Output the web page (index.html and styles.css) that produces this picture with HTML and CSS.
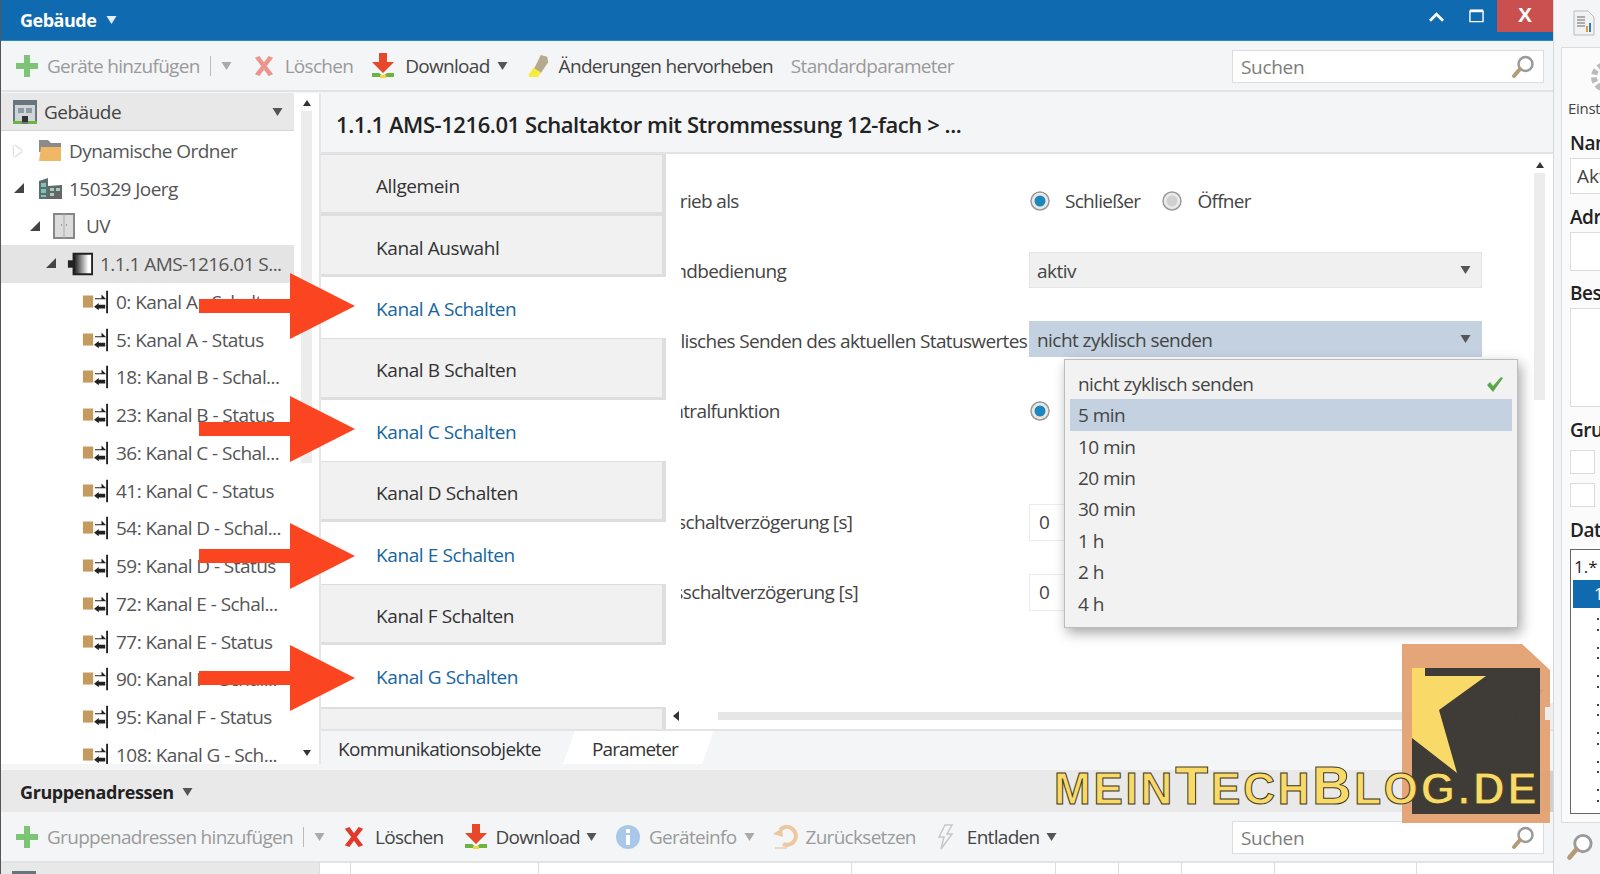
FILE: index.html
```html
<!DOCTYPE html>
<html lang="de">
<head>
<meta charset="utf-8">
<title>Gebäude</title>
<link rel="stylesheet" href="styles.css">
</head>
<body>
<svg class="defs" width="0" height="0" aria-hidden="true">
  <defs>
    <symbol id="i-plus" viewBox="0 0 24 24"><path d="M9 1h6v8h8v6h-8v8H9v-8H1V9h8z" fill="#7cc576"/></symbol>
    <symbol id="i-x" viewBox="0 0 24 24"><path d="M2 3l5-2 5 7 5-7 5 2-7 9 7 9-5 2-5-7-5 7-5-2 7-9z" fill="#e23a2a"/></symbol>
    <symbol id="i-dl" viewBox="0 0 26 28"><path d="M9 1h8v9h7L13 21 2 10h7z" fill="#e8482a"/><path d="M2 21h7l4 3 4-3h7v4H2z" fill="#6cb33f"/><path d="M10 23h6v3h-6z" fill="#f2d840"/></symbol>
    <symbol id="i-mark" viewBox="0 0 24 26"><path d="M14 1l7 2 1 6-8 12-8-4z" fill="#b5aa8e"/><path d="M6 15l8 5-3 5H1v-3z" fill="#f6ec3f"/></symbol>
    <symbol id="i-glass" viewBox="0 0 24 24"><circle cx="14.500" cy="9" r="7" fill="#fff" stroke="#9a9a9a" stroke-width="2.500"/><path d="M9 14l-6 7" stroke="#b39a78" stroke-width="4" stroke-linecap="round"/></symbol>
    <symbol id="i-caret" viewBox="0 0 10 8"><path d="M0 0h10L5 8z" fill="currentColor"/></symbol>
    <symbol id="i-item" viewBox="0 0 28 26"><path d="M1 6h11v13H1z" fill="#c49a5e"/><path d="M14 9h7V5l5 5-5 0h-7z" fill="#222"/><path d="M25 16h-7v-2l-5 4 5 4v-2h7z" fill="#222"/><path d="M26 1h2v24h-2z" fill="#222"/></symbol>
    <symbol id="i-building" viewBox="0 0 26 26"><path d="M1 1h24v24H1z" fill="#68757b"/><path d="M3 6h20v17H3z" fill="#cfd5d9"/><path d="M6 9h6v5H6zM14 9h6v5h-6z" fill="#8d9ca3"/><path d="M10 17h6v6h-6z" fill="#333"/><path d="M1 22h9v3H1zM16 22h9v3h-9z" fill="#6cb33f"/></symbol>
    <symbol id="i-folder" viewBox="0 0 26 26"><path d="M2 2h9l3 3h10v9H2z" fill="#8a8a8a"/><path d="M2 23l2-14h20v14z" fill="#f0b864"/></symbol>
    <symbol id="i-project" viewBox="0 0 26 24"><path d="M2 4l9-3v21H2z" fill="#5f6d70"/><path d="M4 6h5v4H4zM4 12h5v4H4zM4 18h5v2H4z" fill="#7ec3b5"/><path d="M11 9l14-1v14H11z" fill="#666"/><path d="M13 11h4v3h-4zM19 11h4v3h-4zM13 16h4v3h-4z" fill="#9fd0c4"/></symbol>
    <symbol id="i-cab" viewBox="0 0 22 26"><path d="M1 1h20v24H1z" fill="#dcdcdc" stroke="#888" stroke-width="2"/><path d="M11 1v24" stroke="#aaa"/><path d="M8 12h1M13 12h1" stroke="#555"/></symbol>
    <symbol id="i-dev" viewBox="0 0 28 26"><defs><linearGradient id="g-dev" x1="0" x2="1"><stop offset="0" stop-color="#111"/><stop offset=".8" stop-color="#fff"/></linearGradient></defs><path d="M7 2h20v22H7z" fill="url(#g-dev)" stroke="#222" stroke-width="2"/><path d="M1 9h6v8H1z" fill="#222"/></symbol>
    <symbol id="i-radio" viewBox="0 0 20 20"><circle cx="10" cy="10" r="9" fill="#e9e9e9" stroke="#9a9a9a" stroke-width="1.500"/><circle cx="10" cy="10" r="5.500" fill="#1c86bd"/></symbol>
    <symbol id="i-radio-off" viewBox="0 0 20 20"><circle cx="10" cy="10" r="9" fill="#e9e9e9" stroke="#9a9a9a" stroke-width="1.500"/><circle cx="10" cy="10" r="5.500" fill="#d0d0d0"/></symbol>
    <symbol id="i-arrow" viewBox="0 0 156 66"><path d="M0 26h91V0l65 33-65 33V40H0z" fill="#fb4521"/></symbol>
  </defs>
</svg>

<div class="app">
  <main class="win">
    <header class="titlebar">
      <div class="title">Gebäude <svg class="caret caret-w"><use href="#i-caret"/></svg></div>
      <div class="winbtns">
        <svg class="wb wb-up" viewBox="0 0 16 12"><path d="M1 10l7-7 7 7" fill="none" stroke="#fff" stroke-width="3"/></svg>
        <svg class="wb wb-max" viewBox="0 0 16 14"><path d="M1 2h14v11H1z" fill="none" stroke="#fff" stroke-width="1.500"/><path d="M1 1.500h14" stroke="#fff" stroke-width="3"/></svg>
        <div class="wb-close">X</div>
      </div>
    </header>

    <div class="toolbar">
      <span class="tb dis"><svg class="ic ic-plus"><use href="#i-plus"/></svg>Geräte hinzufügen</span>
      <span class="sep"></span><svg class="caret caret-dis"><use href="#i-caret"/></svg>
      <span class="tb dis tb-a"><svg class="ic ic-x ic-x1 faded"><use href="#i-x"/></svg>Löschen</span>
      <span class="tb tb-b"><svg class="ic ic-dl"><use href="#i-dl"/></svg>Download</span><svg class="caret caret-n"><use href="#i-caret"/></svg>
      <span class="tb tb-c"><svg class="ic ic-mark"><use href="#i-mark"/></svg>Änderungen hervorheben</span>
      <span class="tb dis tb-d">Standardparameter</span>
      <div class="search"><span>Suchen</span><svg class="glass"><use href="#i-glass"/></svg></div>
    </div>

    <div class="middle">
      <aside class="side">
        <div class="treehead"><svg class="ic-head"><use href="#i-building"/></svg><span class="treehead-t">Gebäude</span><svg class="caret caret-on"><use href="#i-caret"/></svg></div>
        <ul class="tree">
          <li class="row l0"><i class="tw tw-open"></i><svg class="ti"><use href="#i-folder"/></svg>Dynamische Ordner</li>
          <li class="row l0"><i class="tw tw-down"></i><svg class="ti"><use href="#i-project"/></svg>150329 Joerg</li>
          <li class="row l1"><i class="tw tw-down"></i><svg class="ti ti-cab"><use href="#i-cab"/></svg>UV</li>
          <li class="row l2 sel"><i class="tw tw-down"></i><svg class="ti"><use href="#i-dev"/></svg>1.1.1 AMS-1216.01 S...</li>
          <li class="row l3"><svg class="ti"><use href="#i-item"/></svg>0: Kanal A - Schalt...</li>
          <li class="row l3"><svg class="ti"><use href="#i-item"/></svg>5: Kanal A - Status</li>
          <li class="row l3"><svg class="ti"><use href="#i-item"/></svg>18: Kanal B - Schal...</li>
          <li class="row l3"><svg class="ti"><use href="#i-item"/></svg>23: Kanal B - Status</li>
          <li class="row l3"><svg class="ti"><use href="#i-item"/></svg>36: Kanal C - Schal...</li>
          <li class="row l3"><svg class="ti"><use href="#i-item"/></svg>41: Kanal C - Status</li>
          <li class="row l3"><svg class="ti"><use href="#i-item"/></svg>54: Kanal D - Schal...</li>
          <li class="row l3"><svg class="ti"><use href="#i-item"/></svg>59: Kanal D - Status</li>
          <li class="row l3"><svg class="ti"><use href="#i-item"/></svg>72: Kanal E - Schal...</li>
          <li class="row l3"><svg class="ti"><use href="#i-item"/></svg>77: Kanal E - Status</li>
          <li class="row l3"><svg class="ti"><use href="#i-item"/></svg>90: Kanal F - Schal...</li>
          <li class="row l3"><svg class="ti"><use href="#i-item"/></svg>95: Kanal F - Status</li>
          <li class="row l3"><svg class="ti"><use href="#i-item"/></svg>108: Kanal G - Sch...</li>
        </ul>
      </aside>
      <div class="vscroll">
        <i class="tri tri-up"></i><div class="vthumb"></div><i class="tri tri-down"></i>
      </div>

      <section class="detail">
        <h1 class="dtitle">1.1.1 AMS-1216.01 Schaltaktor mit Strommessung 12-fach &gt; ...</h1>
        <div class="dbody">
          <nav class="tabs">
            <div class="tab off">Allgemein</div>
            <div class="tab off">Kanal Auswahl</div>
            <div class="tab on">Kanal A Schalten</div>
            <div class="tab off">Kanal B Schalten</div>
            <div class="tab on">Kanal C Schalten</div>
            <div class="tab off">Kanal D Schalten</div>
            <div class="tab on">Kanal E Schalten</div>
            <div class="tab off">Kanal F Schalten</div>
            <div class="tab on">Kanal G Schalten</div>
            <div class="tab-stub"></div>
          </nav>
          <div class="pane">
            <div class="form">
              <div class="frow"><label class="lb"><span>Betrieb als</span></label>
                <div class="radios"><svg class="rd"><use href="#i-radio"/></svg><span>Schließer</span><svg class="rd rd-2"><use href="#i-radio-off"/></svg><span>Öffner</span></div></div>
              <div class="frow"><label class="lb"><span>Handbedienung</span></label>
                <div class="sel-box">aktiv<svg class="caret caret-on"><use href="#i-caret"/></svg></div></div>
              <div class="frow"><label class="lb"><span>Zyklisches Senden des aktuellen Statuswertes</span></label>
                <div class="sel-box sel-open">nicht zyklisch senden<svg class="caret caret-on"><use href="#i-caret"/></svg></div></div>
              <div class="frow"><label class="lb"><span>Zentralfunktion</span></label>
                <div class="radios"><svg class="rd"><use href="#i-radio"/></svg></div></div>
              <div class="fgap"></div>
              <div class="frow"><label class="lb"><span>Einschaltverzögerung [s]</span></label><div class="num">0</div></div>
              <div class="frow"><label class="lb"><span>Ausschaltverzögerung [s]</span></label><div class="num">0</div></div>
            </div>
            <div class="pv"><i class="tri tri-up"></i><div class="pv-thumb"></div><i class="tri tri-down"></i></div>
            <div class="ph-corner"></div>
            <div class="ph"><i class="tri tri-left"></i><div class="ph-thumb"></div><i class="tri tri-right"></i></div>
          </div>
        </div>
        <div class="dtabs">
          <span class="dtab">Kommunikationsobjekte</span>
          <span class="dtab dtab-on">Parameter</span>
        </div>
      </section>
    </div>

    <div class="gap-strip"></div>
    <div class="groupbar">Gruppenadressen <svg class="caret caret-on"><use href="#i-caret"/></svg>
      <div class="gb-btns">
        <svg class="wb gb-up" viewBox="0 0 16 12"><path d="M1 10l7-7 7 7" fill="none" stroke="#111" stroke-width="3"/></svg>
        <svg class="wb gb-max" viewBox="0 0 16 14"><path d="M1 2h14v11H1z" fill="none" stroke="#111" stroke-width="2"/></svg>
        <div class="gb-close">×</div>
      </div>
    </div>

    <div class="toolbar toolbar-2">
      <span class="tb dis"><svg class="ic ic-plus"><use href="#i-plus"/></svg>Gruppenadressen hinzufügen</span>
      <span class="sep"></span><svg class="caret caret-dis"><use href="#i-caret"/></svg>
      <span class="tb t2-a"><svg class="ic ic-x ic-x2"><use href="#i-x"/></svg>Löschen</span>
      <span class="tb t2-b"><svg class="ic ic-dl ic-dl2"><use href="#i-dl"/></svg>Download</span><svg class="caret caret-m"><use href="#i-caret"/></svg>
      <span class="tb dis t2-c"><svg class="ic ic-info" viewBox="0 0 24 24"><circle cx="12" cy="12" r="12" fill="#a9c8e8"/><path d="M10 10h4v10h-4zM10 4h4v4h-4z" fill="#fff"/></svg>Geräteinfo</span><svg class="caret caret-dis caret-i"><use href="#i-caret"/></svg>
      <span class="tb dis t2-d"><svg class="ic ic-undo" viewBox="0 0 26 24"><path d="M8 5a9 9 0 1 1 3 14" fill="none" stroke="#edc79f" stroke-width="4"/><path d="M1 9l9-6 1 9z" fill="#edc79f"/><path d="M3 22h12v2H3z" fill="#f0d8bf"/></svg>Zurücksetzen</span>
      <span class="tb t2-e"><svg class="ic ic-bolt" viewBox="0 0 18 26"><path d="M9 1h7l-5 9h5L5 25l3-12H3z" fill="#f6f6f6" stroke="#c8c8c8" stroke-width="1.500"/></svg>Entladen</span><svg class="caret caret-m"><use href="#i-caret"/></svg>
      <div class="search"><span>Suchen</span><svg class="glass"><use href="#i-glass"/></svg></div>
    </div>

    <div class="tablehead">
      <div class="th-left"><svg class="th-ic"><use href="#i-building"/></svg></div>
      <div class="th th-1"></div><div class="th th-2"></div><div class="th th-3"></div><div class="th th-4"></div><div class="th th-5"></div><div class="th th-6"></div><div class="th th-7"></div><div class="th th-8"></div><div class="th"></div>
    </div>

    <ul class="menu">
      <li class="mi">nicht zyklisch senden<svg class="check" viewBox="0 0 18 16"><path d="M1 9l3-3 3 4 8-9 2 1-10 14z" fill="#5aa64a"/></svg></li>
      <li class="mi mi-hover">5 min</li>
      <li class="mi">10 min</li>
      <li class="mi">20 min</li>
      <li class="mi">30 min</li>
      <li class="mi">1 h</li>
      <li class="mi">2 h</li>
      <li class="mi">4 h</li>
    </ul>
  </main>

  <aside class="rail">
    <svg class="rail-doc" viewBox="0 0 22 26"><path d="M1 1h14l6 6v18H1z" fill="#f2f2f2" stroke="#bbb"/><path d="M4 7h8M4 10h8M4 13h8M4 16h8" stroke="#666"/><path d="M14 22v-6" stroke="#e09a3c" stroke-width="2"/><path d="M17 22v-9" stroke="#2f7fc1" stroke-width="2"/></svg>
    <div class="rail-panel">
      <svg class="rail-gear" viewBox="0 0 26 30"><circle cx="20" cy="15" r="12" fill="none" stroke="#bbb" stroke-width="6" stroke-dasharray="5 3"/></svg>
      <div class="rail-cap">Einstellungen</div>
      <div class="rail-h">Name</div>
      <div class="rail-in rail-in-1">Aktor</div>
      <div class="rail-h">Adresse</div>
      <div class="rail-in rail-in-2"></div>
      <div class="rail-h">Beschreibung</div>
      <div class="rail-in rail-in-3"></div>
      <div class="rail-h">Gruppen</div>
      <div class="rail-chk rail-chk-1"></div>
      <div class="rail-chk"></div>
      <div class="rail-h rail-h-dat">Datenpunkt</div>
      <div class="rail-list">
        <div class="rail-li">1.*</div>
        <div class="rail-li rail-li-sel">1</div>
        <div class="rail-dots"><i></i><i></i><i></i><i></i><i></i><i></i><i></i></div>
      </div>
    </div>
    <svg class="rail-glass"><use href="#i-glass"/></svg>
  </aside>

  <svg class="arrow arrow-1"><use href="#i-arrow"/></svg>
  <svg class="arrow arrow-2"><use href="#i-arrow"/></svg>
  <svg class="arrow arrow-3"><use href="#i-arrow"/></svg>
  <svg class="arrow arrow-4"><use href="#i-arrow"/></svg>

  <div class="logo">
    <svg class="logo-card" viewBox="0 0 148 179"><path d="M0 0h120l28 26v37h-5v13h5v103H0z" fill="#e3a272" fill-opacity=".96"/><path d="M10 24h128v146H10z" fill="#333" fill-opacity=".93"/><path d="M10 24h13v8h61L37 66l18 63-45-35z" fill="#f9d967"/></svg>
    <div class="logo-text"><span class="sm">MEIN</span><span class="lg">T</span><span class="sm">ECH</span><span class="lg">B</span><span class="sm">LOG.DE</span></div>
  </div>
</div>
</body>
</html>
```

FILE: styles.css
```css
* { box-sizing: border-box; }
html, body { margin: 0; height: 100%; overflow: hidden; }
body { font-family: "Open Sans", "Noto Sans", "Liberation Sans", sans-serif; font-size: 19px; color: #444; background: #f4f5f7; }
ul { list-style: none; margin: 0; padding: 0; }
.defs { position: absolute; }

.app { width: 1600px; height: 874px; display: flex; position: relative; overflow: hidden; }
.win { width: 1553px; height: 874px; flex: none; position: relative; display: flex; flex-direction: column; border-left: 1px solid #555; }

.titlebar { height: 41px; flex: none; background: #106ab0; color: #fff; display: flex; justify-content: space-between; border-bottom: 1px solid #2f86c4; }
.title { padding: 8px 0 0 19px; font-weight: 700; font-size: 18px; letter-spacing: -.5px; }
.caret { width: 11px; height: 8px; color: #555; flex: none; }
.caret-w { color: #e4eef7; margin: 0 0 3px 6px; }
.caret-dis { color: #aaa; margin-left: 10px; }
.caret-on { margin-left: 10px; }
.caret-n { margin-left: 7px; }
.caret-m { margin-left: 6px; }
.caret-i { margin-left: 8px; }
.winbtns { display: flex; align-items: flex-start; }
.wb { width: 15px; flex: none; }
.wb-up { height: 12px; margin: 11px 25px 0 0; }
.wb-max { height: 14px; margin: 9px 13px 0 0; }
.wb-close { width: 56px; height: 32px; background: #c9504f; color: #fff; font-size: 21px; font-weight: 700; text-align: center; line-height: 30px; font-family: "Liberation Sans", sans-serif; }

.toolbar { height: 51px; flex: none; display: flex; align-items: center; padding: 1px 0 0 14px; background: #f4f5f7; border-bottom: 2px solid #e2e3e5; position: relative; font-size: 19px; letter-spacing: -.7px; }
.tb { display: inline-flex; align-items: center; color: #444; white-space: nowrap; }
.dis { color: #9a9a9a; }
.ic { flex: none; margin-right: 9px; }
.ic-plus { width: 24px; height: 24px; margin-right: 8px; }
.ic-x { width: 22px; height: 24px; }
.ic-x1 { margin-right: 10px; }
.ic-x2 { margin-right: 10px; }
.ic-dl { width: 26px; height: 28px; }
.ic-dl2 { margin-right: 7px; }
.ic-mark { width: 22px; height: 26px; }
.ic-info { width: 24px; height: 24px; }
.ic-undo { width: 26px; height: 24px; margin-right: 7px; }
.ic-bolt { width: 18px; height: 26px; margin-right: 13px; }
.faded { opacity: .5; }
.sep { width: 1px; height: 20px; background: #bbb; margin-left: 10px; }
.tb-a { margin-left: 21px; }
.tb-b { margin-left: 17px; }
.tb-c { margin-left: 20px; }
.tb-d { margin-left: 18px; }
.t2-a { margin-left: 18px; }
.t2-b { margin-left: 19px; }
.t2-c { margin-left: 19px; }
.t2-d { margin-left: 17px; }
.t2-e { margin-left: 20px; }

.search { position: absolute; left: 1231px; top: 9px; width: 312px; height: 33px; background: #fff; border: 1px solid #dcdcdc; padding-left: 8px; display: flex; align-items: center; justify-content: space-between; color: #7c7c7c; letter-spacing: -.3px; }
.glass { width: 24px; height: 24px; margin-right: 8px; }

.middle { height: 672px; flex: none; display: flex; padding-top: 1px; }
.side { width: 293px; flex: none; overflow: hidden; background: #fff; }
.treehead { height: 38px; background: #e8e8e8; border-bottom: 1px solid #d4d4d4; display: flex; align-items: center; padding: 0 11px 0 10px; font-weight: 500; letter-spacing: -.5px; }
.treehead-t { flex: 1; margin-left: 4px; color: #444; }
.ic-head { width: 26px; height: 26px; margin-left: 1px; margin-right: 2px; }
.tree { padding-top: 1px; height: 633px; overflow: hidden; }
.row { height: 37.75px; display: flex; align-items: center; white-space: nowrap; color: #555; position: relative; font-size: 19px; letter-spacing: -.55px; }
.ti { width: 26px; height: 26px; flex: none; margin-right: 6px; }
.ti-cab { width: 22px; margin-right: 11px; }
.l0 { padding-left: 36px; }
.l1 { padding-left: 52px; }
.l2 { padding-left: 66px; }
.l2 .ti { margin-right: 7px; }
.l3 { padding-left: 81px; }
.l3 .ti { margin-right: 8px; }
.sel { background: #e4e4e4; }
.tw { position: absolute; top: 13px; width: 0; height: 0; }
.l0 .tw { left: 13px; }
.l1 .tw { left: 29px; }
.l2 .tw { left: 45px; }
.tw-open { border-left: 8px solid #fff; border-top: 6px solid transparent; border-bottom: 6px solid transparent; filter: drop-shadow(0 0 1px #999); }
.tw-down { border-bottom: 10px solid #444; border-left: 10px solid transparent; }

.vscroll { width: 27px; flex: none; background: #fff; position: relative; border-right: 2px solid #e6e6e6; display: flex; flex-direction: column; align-items: center; }
.tri { width: 0; height: 0; display: block; flex: none; }
.tri-up { border-left: 4px solid transparent; border-right: 4px solid transparent; border-bottom: 6px solid #333; }
.tri-down { border-left: 4px solid transparent; border-right: 4px solid transparent; border-top: 6px solid #333; }
.tri-left { border-top: 5px solid transparent; border-bottom: 5px solid transparent; border-right: 6px solid #333; }
.tri-right { border-top: 5px solid transparent; border-bottom: 5px solid transparent; border-left: 6px solid #333; }
.vscroll .tri-up { margin-top: 7px; }
.vthumb { width: 11px; height: 352px; background: #ececec; margin: 5px 0 0 0; flex: none; }
.vscroll .tri-down { margin-top: auto; margin-bottom: 8px; }

.detail { flex: 1; min-width: 0; display: flex; flex-direction: column; height: 671px; }
.dtitle { height: 61px; flex: none; margin: 0; padding-left: 15px; font-size: 22px; font-weight: 600; line-height: 62px; color: #222; letter-spacing: -.43px; background: #f4f5f7; border-bottom: 2px solid #e2e3e5; white-space: nowrap; }
.dbody { height: 575px; flex: none; display: flex; }
.tabs { width: 345px; flex: none; display: grid; grid-template-rows: repeat(9, 61.4px) 22px; }
.tab { display: flex; align-items: center; padding: 3px 0 0 55px; letter-spacing: -.4px; }
.off { background: #f1f1f1; color: #333; border: 0 solid #dedede; border-width: 1px 4px 3px 0; padding-top: 5px; }
.on { background: #fff; color: #16659f; }
.tab-stub { background: #f1f1f1; border-top: 2px solid #dedede; border-right: 4px solid #dedede; }

.pane { flex: 1; min-width: 0; position: relative; background: #fff; }
.form { padding: 12px 0 0 15px; }
.frow { height: 70px; display: flex; align-items: center; }
.fgap { height: 41px; }
.lb { width: 347px; flex: none; overflow: hidden; white-space: nowrap; margin-right: 1px; letter-spacing: -.65px; }
.lb span { margin-left: -29px; color: #444; }
.radios { display: flex; align-items: center; margin-left: 1px; letter-spacing: -.7px; }
.rd { width: 20px; height: 20px; flex: none; margin: 0 15px 0 0; }
.rd-2 { margin-left: 22px; }
.sel-box { width: 453px; height: 36px; margin-bottom: 2px; background: #f0f0f0; border: 1px solid #e4e4e4; display: flex; align-items: center; justify-content: space-between; padding: 2px 10px 0 7px; letter-spacing: -.55px; }
.sel-box .caret { margin-bottom: 2px; }
.sel-open { background: #c3d1e0; border-color: #c3d1e0; margin-bottom: 4px; }
.num { width: 60px; height: 37px; border: 1px solid #ececec; line-height: 35px; padding-left: 9px; }

.pv { position: absolute; left: 865px; top: 0; width: 17px; height: 541px; display: flex; flex-direction: column; align-items: center; }
.pv .tri-up { margin-top: 8px; }
.pv-thumb { width: 11px; margin-top: 5px; height: 227px; background: #ececec; }
.pv .tri-down { margin-top: auto; }
.ph { position: absolute; left: 7px; top: 551px; width: 858px; height: 22px; display: flex; align-items: center; }
.ph-thumb { width: 786px; height: 8px; background: #e6e6e6; margin: 0 9px 0 39px; flex: none; }
.ph-corner { position: absolute; left: 861px; top: 549px; width: 26px; height: 26px; background: #eee; }

.dtabs { height: 35px; flex: none; background: #f4f5f7; display: flex; letter-spacing: -.65px; border-top: 2px solid #e2e3e5; }
.dtab { padding-left: 17px; color: #333; line-height: 37px; height: 33px; }
.dtab-on { background: #fff; width: 151px; margin-left: 22px; padding-left: 29px; letter-spacing: -.85px; clip-path: polygon(12px 0, 100% 0, calc(100% - 12px) 100%, 0 100%); }

.gap-strip { height: 6px; flex: none; background: #f4f5f7; }
.groupbar { height: 42px; flex: none; background: #e9e9e9; font-weight: 700; color: #222; font-size: 18px; padding: 1px 0 0 19px; display: flex; align-items: center; letter-spacing: -.4px; }
.groupbar .caret { margin-left: 8px; }
.gb-btns { margin-left: auto; display: flex; align-items: center; height: 41px; }
.gb-up { height: 12px; margin-right: 23px; }
.gb-max { height: 14px; margin-right: 13px; }
.gb-close { width: 56px; height: 41px; background: #cfcfcf; color: #888; font-size: 30px; font-weight: 400; text-align: center; line-height: 38px; }
.toolbar-2 { height: 51px; }
.tablehead { height: 12px; flex: none; display: flex; background: #fff; }
.th-left { width: 318px; background: #e8e8e8; overflow: hidden; padding-left: 10px; }
.th-ic { width: 26px; height: 26px; margin-top: 7px; }
.th { border-left: 1px solid #ddd; height: 12px; }
.th-1 { width: 31px; }
.th-2 { width: 188px; }
.th-3 { width: 313px; }
.th-4 { width: 204px; }
.th-5 { width: 63px; }
.th-6 { width: 63px; }
.th-7 { width: 93px; }
.th-8 { width: 142px; }

.menu { position: absolute; left: 1063px; top: 359px; width: 454px; height: 269px; background: #f2f2f2; border: 1px solid #bdbdbd; padding: 8px 5px 0; box-shadow: 3px 5px 12px rgba(0,0,0,.35); }
.mi { height: 31.45px; display: flex; align-items: center; justify-content: space-between; padding: 0 8px; color: #444; letter-spacing: -.55px; }
.mi-hover { background: #c3d1e0; }
.check { width: 18px; height: 16px; }

.rail { width: 47px; flex: none; height: 874px; background: #f4f5f7; position: relative; overflow: hidden; border-left: 1px solid #d8d8d8; }
.rail-doc { display: block; width: 22px; height: 26px; margin: 10px 0 0 19px; }
.rail-panel { margin: 11px 0 0 7px; width: 60px; height: 776px; background: #fbfbfc; border: 1px solid #dcdcdc; border-right: 0; padding-left: 8px; }
.rail-gear { display: block; width: 26px; height: 30px; margin: 14px 0 0 16px; }
.rail-cap { font-size: 15px; margin: 6px 0 0 -2px; letter-spacing: -.3px; white-space: nowrap; line-height: 20px; }
.rail-h { font-size: 19px; line-height: 26px; color: #222; font-weight: 600; white-space: nowrap; letter-spacing: -.5px; }
.rail-cap + .rail-h { margin-top: 12px; }
.rail-in { border: 1px solid #dcdcdc; width: 60px; margin: 2px 0 10px; background: #fff; font-size: 19px; line-height: 34px; padding-left: 6px; white-space: nowrap; overflow: hidden; }
.rail-in-1 { height: 36px; }
.rail-in-2 { height: 39px; margin-bottom: 9px; }
.rail-in-3 { height: 99px; margin-bottom: 10px; }
.rail-chk { width: 25px; height: 24px; border: 1px solid #dcdcdc; margin-bottom: 9px; background: #fff; }
.rail-chk-1 { margin-top: 7px; }
.rail-h-dat { margin-top: 10px; }
.rail-list { width: 60px; height: 265px; border: 1px solid #666; margin-top: 6px; padding: 3px 0 0 2px; background: #fff; }
.rail-li { height: 27px; font-size: 17px; line-height: 27px; padding-left: 1px; color: #222; }
.rail-li-sel { background: #106ab0; color: #fff; padding-left: 21px; height: 28px; }
.rail-dots { display: flex; flex-direction: column; gap: 16px; padding: 10px 0 0 24px; }
.rail-dots i { display: block; width: 2px; height: 12.500px; border-top: 2px solid #444; border-bottom: 2px solid #444; }
.rail-glass { position: absolute; left: 12px; top: 833px; width: 28px; height: 28px; }

.arrow { position: absolute; left: 199px; width: 156px; height: 66px; pointer-events: none; }
.arrow-1 { top: 273px; }
.arrow-2 { top: 396px; }
.arrow-3 { top: 523px; }
.arrow-4 { top: 645px; }

.logo { position: absolute; left: 1402px; top: 644px; width: 148px; height: 179px; }
.logo-card { display: block; width: 148px; height: 179px; }
.logo-text { position: absolute; left: -348px; top: 118px; white-space: nowrap; font-family: "Liberation Sans", sans-serif; font-weight: 700; color: #f9d967; -webkit-text-stroke: 1px #3f3a20; line-height: 46px; letter-spacing: 2.8px; }
.sm { font-size: 44px; }
.lg { font-size: 54px; }
```
